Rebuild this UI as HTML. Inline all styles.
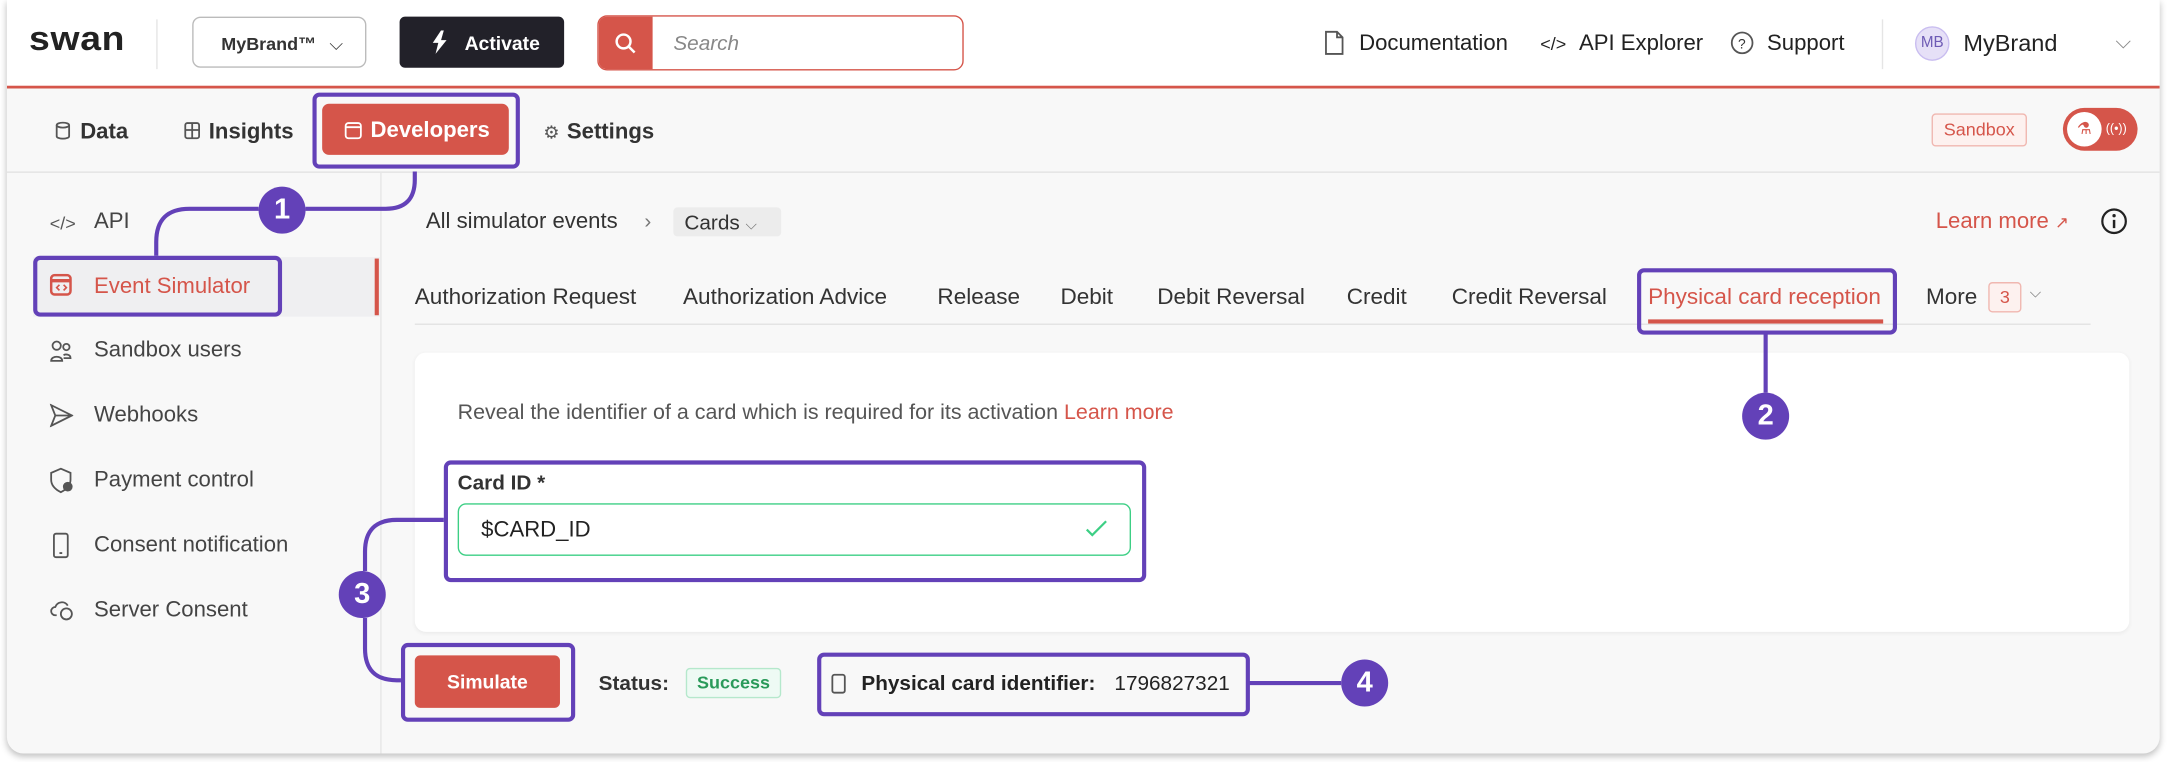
<!DOCTYPE html>
<html><head><meta charset="utf-8">
<style>
*{box-sizing:border-box;margin:0;padding:0}
html,body{width:2168px;height:761px;overflow:hidden;background:#fff}
#w{position:absolute;left:0;top:0;width:1568px;height:551px;transform:scale(1.38265);transform-origin:0 0;font-family:"Liberation Sans",sans-serif;color:#222;font-size:15.5px}
.a{position:absolute;white-space:nowrap}
.card{position:absolute;left:5px;top:0;width:1557px;height:545px;background:#f8f8f8;border-radius:0 0 12px 12px;box-shadow:0 2px 5px rgba(0,0,0,.25);overflow:hidden}
.pb{position:absolute;border:3px solid #6341b8;border-radius:5px}
.num{position:absolute;width:34px;height:34px;border-radius:50%;background:#6341b8;color:#fff;font-weight:bold;font-size:21px;text-align:center;line-height:34px}
svg{position:absolute}
.ic{stroke:#555;fill:none;stroke-width:1.3}
.t{font-size:16.3px;color:#333;top:206px}
</style></head><body>
<div id="w">
<div class="card">
 <div class="a" style="left:0;top:0;width:1557px;height:63px;background:#fff"></div>
 <div class="a" style="left:0;top:62px;width:1557px;height:2px;background:#d5554a"></div>
 <div class="a" style="left:0;top:124px;width:1557px;height:1px;background:#e3e3e3"></div>
 <div class="a" style="left:270px;top:125px;width:1px;height:420px;background:#e6e6e6"></div>
</div>
<!-- header -->
<div class="a" style="left:21px;top:13px;font-size:27px;letter-spacing:0.5px;color:#222;font-weight:bold;transform:scaleY(0.92)">swan</div>
<div class="a" style="left:113px;top:14px;width:1px;height:36px;background:#e5e5e5"></div>
<div class="a" style="left:139px;top:12px;width:126px;height:37px;border:1px solid #bbb;border-radius:6px;font-size:13px;padding:11px 0 0 20px;font-weight:bold;color:#333">MyBrand™ <span style="font-weight:normal;font-size:13px;margin-left:6px">⌵</span></div>
<div class="a" style="left:289px;top:12px;width:119px;height:37px;background:#222129;border-radius:4px;color:#fff;font-size:14px;font-weight:bold;padding:11px 0 0 47px">Activate</div>
<svg style="left:312px;top:22px" width="12" height="17" viewBox="0 0 12 17"><path d="M7 0L1 9h4l-2 8 8-10H7l2-7z" fill="#fff"/></svg>
<div class="a" style="left:432px;top:11px;width:265px;height:40px;border:1.5px solid #d5554a;border-radius:7px;overflow:hidden;background:#fff">
 <div class="a" style="left:0;top:0;width:39px;height:40px;background:#d5554a"></div>
 <svg style="left:11px;top:11px" width="17" height="17" viewBox="0 0 17 17"><circle cx="7" cy="7" r="5" stroke="#fff" stroke-width="1.8" fill="none"/><path d="M11 11l4 4" stroke="#fff" stroke-width="1.8"/></svg>
 <div class="a" style="left:54px;top:11px;color:#888;font-style:italic;font-size:15px">Search</div>
</div>
<svg style="left:958px;top:22px" width="14" height="18" viewBox="0 0 14 18"><path class="ic" d="M1 1h8l4 4v12H1z M9 1v4h4" stroke="#333"/></svg>
<div class="a" style="left:983px;top:23px;font-size:16px">Documentation</div>
<div class="a" style="left:1114px;top:24px;font-size:13px">&lt;/&gt;</div>
<div class="a" style="left:1142px;top:23px;font-size:16px">API Explorer</div>
<svg style="left:1251px;top:22px" width="18" height="18" viewBox="0 0 18 18"><circle cx="9" cy="9" r="7.5" class="ic" stroke="#333"/><text x="6" y="13" font-size="10" fill="#333" font-family="Liberation Sans">?</text></svg>
<div class="a" style="left:1278px;top:23px;font-size:16px">Support</div>
<div class="a" style="left:1361px;top:14px;width:1px;height:36px;background:#e5e5e5"></div>
<div class="a" style="left:1385px;top:19px;width:25px;height:25px;border-radius:50%;background:#e6e0f7;border:1px solid #c9bdf0;color:#6e5bb5;font-size:11px;text-align:center;line-height:23px">MB</div>
<div class="a" style="left:1420px;top:22px;font-size:17px">MyBrand</div>
<div class="a" style="left:1530px;top:22px;font-size:15px;color:#888">⌵</div>
<!-- nav -->
<svg style="left:40px;top:88px" width="11" height="13" viewBox="0 0 11 13"><ellipse cx="5.5" cy="2.5" rx="4.5" ry="1.8" class="ic"/><path class="ic" d="M1 2.5v8c0 1 2 1.8 4.5 1.8s4.5-.8 4.5-1.8v-8"/></svg>
<div class="a" style="left:58px;top:87px;font-size:16px;font-weight:bold;color:#333">Data</div>
<svg style="left:133px;top:88px" width="12" height="13" viewBox="0 0 12 13"><rect x="1" y="1" width="10" height="11" rx="1.5" class="ic"/><path class="ic" d="M6 1v11M1 6h10"/></svg>
<div class="a" style="left:151px;top:87px;font-size:16px;font-weight:bold;color:#333">Insights</div>
<div class="a" style="left:233px;top:75px;width:135px;height:37px;background:#d5554a;border-radius:5px;color:#fff;font-weight:bold;font-size:16px;padding:11px 0 0 35px">Developers</div>
<svg style="left:249px;top:88px" width="14" height="14" viewBox="0 0 14 14"><rect x="1" y="1" width="11" height="11" rx="2" stroke="#fff" fill="none" stroke-width="1.3"/><path d="M1 4h11" stroke="#fff" stroke-width="1.3"/></svg>
<div class="pb" style="left:226px;top:67px;width:150px;height:55px"></div>
<div class="a" style="left:393px;top:88px;font-size:13px;color:#555">⚙</div>
<div class="a" style="left:410px;top:87px;font-size:16px;font-weight:bold;color:#333">Settings</div>
<div class="a" style="left:1397px;top:82px;width:69px;height:24px;border:1px solid #f0b7b0;background:#fdf1ef;border-radius:3px;color:#d5554a;font-size:13px;text-align:center;line-height:22px">Sandbox</div>
<div class="a" style="left:1492px;top:78px;width:54px;height:31px;border-radius:16px;background:#d5554a">
 <div class="a" style="left:3px;top:3px;width:25px;height:25px;border-radius:50%;background:#fff;color:#d5554a;font-size:12px;text-align:center;line-height:25px">⚗</div>
 <div class="a" style="left:31px;top:10px;color:#fff;font-size:9px">((•))</div>
</div>
<!-- sidebar -->
<div class="a" style="left:24px;top:186px;width:251px;height:43px;background:#efeff1"></div>
<div class="a" style="left:271px;top:187px;width:3px;height:41px;background:#d5554a"></div>
<div class="a" style="left:36px;top:154px;font-size:13px;color:#555">&lt;/&gt;</div>
<div class="a" style="left:68px;top:152px;font-size:16px;color:#444">API</div>
<svg style="left:36px;top:198px" width="18" height="18" viewBox="0 0 18 18"><rect x="1" y="1" width="14" height="14" rx="2.5" stroke="#d5554a" fill="none" stroke-width="1.8"/><path d="M1 5h14" stroke="#d5554a" stroke-width="2.5"/><path d="M7 8l-2 2 2 2M10 8l2 2-2 2" stroke="#d5554a" stroke-width="1.2" fill="none"/></svg>
<div class="a" style="left:68px;top:199px;font-size:16px;color:#d5554a">Event Simulator</div>
<div class="pb" style="left:24px;top:185px;width:180px;height:44px"></div>
<svg style="left:36px;top:246px" width="17" height="17" viewBox="0 0 17 17"><circle cx="5" cy="4" r="3" class="ic"/><circle cx="12" cy="5" r="2.3" class="ic"/><path class="ic" d="M1 15c0-4 8-4 8 0zM10 13h5c0-3-4-3-5-2"/></svg>
<div class="a" style="left:68px;top:245px;font-size:16px;color:#444">Sandbox users</div>
<svg style="left:36px;top:292px" width="17" height="17" viewBox="0 0 17 17"><path class="ic" d="M1 1l15 7.5L1 16l3-7.5z M4 8.5h12"/></svg>
<div class="a" style="left:68px;top:292px;font-size:16px;color:#444">Webhooks</div>
<svg style="left:36px;top:338px" width="18" height="19" viewBox="0 0 18 19"><path class="ic" d="M8 1l7 3v5c0 4-3 7-7 9-4-2-7-5-7-9V4z"/><circle cx="13" cy="14" r="3.5" fill="#555"/></svg>
<div class="a" style="left:68px;top:339px;font-size:16px;color:#444">Payment control</div>
<svg style="left:38px;top:385px" width="12" height="19" viewBox="0 0 12 19"><rect x="1" y="1" width="10" height="17" rx="1.5" class="ic"/><path class="ic" d="M5 15h2"/></svg>
<div class="a" style="left:68px;top:386px;font-size:16px;color:#444">Consent notification</div>
<svg style="left:36px;top:432px" width="18" height="18" viewBox="0 0 18 18"><path class="ic" d="M5 13H4a3 3 0 010-6 5 5 0 019-1"/><circle cx="12" cy="12" r="4" class="ic"/></svg>
<div class="a" style="left:68px;top:433px;font-size:16px;color:#444">Server Consent</div>
<!-- breadcrumb -->
<div class="a" style="left:308px;top:152px;font-size:16px;color:#333">All simulator events</div>
<div class="a" style="left:466px;top:152px;font-size:15px;color:#777">›</div>
<div class="a" style="left:487px;top:150px;width:78px;height:21px;background:#ececec;border-radius:3px;font-size:15px;padding:3px 0 0 8px;color:#333">Cards <span style="font-size:11px;color:#777">⌵</span></div>
<div class="a" style="left:1400px;top:152px;font-size:16px;color:#d5554a">Learn more <span style="font-size:12px">↗</span></div>
<svg style="left:1519px;top:150px" width="20" height="20" viewBox="0 0 20 20"><circle cx="10" cy="10" r="8.5" stroke="#222" stroke-width="1.6" fill="none"/><path d="M10 9v6" stroke="#222" stroke-width="1.8"/><circle cx="10" cy="6" r="1.2" fill="#222"/></svg>
<!-- tabs -->
<div class="a" style="left:300px;top:234px;width:1212px;height:1px;background:#e2e2e2"></div>
<div class="a t" style="left:300px">Authorization Request</div>
<div class="a t" style="left:494px">Authorization Advice</div>
<div class="a t" style="left:678px">Release</div>
<div class="a t" style="left:767px">Debit</div>
<div class="a t" style="left:837px">Debit Reversal</div>
<div class="a t" style="left:974px">Credit</div>
<div class="a t" style="left:1050px">Credit Reversal</div>
<div class="a t" style="left:1192px;color:#d5554a">Physical card reception</div>
<div class="a" style="left:1192px;top:231px;width:170px;height:3px;background:#d5554a"></div>
<div class="pb" style="left:1184px;top:194px;width:188px;height:48px"></div>
<div class="a t" style="left:1393px">More</div>
<div class="a" style="left:1438px;top:204px;width:24px;height:22px;border:1px solid #f0b7b0;background:#fdf1ef;border-radius:3px;color:#d5554a;font-size:13px;text-align:center;line-height:20px">3</div>
<div class="a" style="left:1468px;top:206px;font-size:11px;color:#777">⌵</div>
<!-- content card -->
<div class="a" style="left:300px;top:255px;width:1240px;height:202px;background:#fff;border-radius:8px;box-shadow:0 1px 3px rgba(0,0,0,.06)"></div>
<div class="a" style="left:331px;top:290px;font-size:15.5px;color:#555">Reveal the identifier of a card which is required for its activation <span style="color:#d5554a">Learn more</span></div>
<div class="a" style="left:331px;top:341px;font-size:15px;font-weight:bold;color:#333">Card ID *</div>
<div class="a" style="left:331px;top:364px;width:487px;height:38px;border:1.3px solid #3dcf85;border-radius:6px"></div>
<div class="a" style="left:348px;top:375px;font-size:16px;color:#222">$CARD_ID</div>
<svg style="left:785px;top:376px" width="16" height="13" viewBox="0 0 16 13"><path d="M1 7l4 4 10-10" stroke="#3dcf85" stroke-width="1.6" fill="none"/></svg>
<div class="pb" style="left:321px;top:333px;width:508px;height:88px"></div>
<!-- annotation lines -->
<svg style="left:0;top:0" width="1568" height="551" viewBox="0 0 1568 551"><g stroke="#6341b8" stroke-width="3" fill="none">
<path d="M300 124v6q0 21-21 21h-58"/>
<path d="M187 151h-50q-24 0-24 24v10"/>
<path d="M1277 241v43"/>
<path d="M321 376h-34q-23 0-23 23v14"/>
<path d="M264 447v22q0 23 23 23h3"/>
<path d="M903 494h67"/>
</g></svg>
<div class="num" style="left:187px;top:135px">1</div>
<div class="num" style="left:1260px;top:284px">2</div>
<div class="num" style="left:245px;top:413px">3</div>
<div class="num" style="left:970px;top:477px">4</div>
<!-- bottom row -->
<div class="a" style="left:300px;top:474px;width:105px;height:38px;background:#d5554a;border-radius:4px;color:#fff;font-size:14px;font-weight:bold;text-align:center;line-height:38px">Simulate</div>
<div class="pb" style="left:290px;top:465px;width:126px;height:57px"></div>
<div class="a" style="left:433px;top:486px;font-size:15px;font-weight:bold;color:#333">Status:</div>
<div class="a" style="left:496px;top:483px;width:69px;height:22px;background:#eefaf4;border:1px solid #b5e8cc;border-radius:3px;color:#2a9a5a;font-size:13px;font-weight:bold;text-align:center;line-height:20px">Success</div>
<div class="pb" style="left:591px;top:472px;width:313px;height:46px"></div>
<svg style="left:601px;top:487px" width="11" height="15" viewBox="0 0 11 15"><rect x="1" y="1" width="9" height="13" rx="1.5" class="ic"/></svg>
<div class="a" style="left:623px;top:486px;font-size:15px;font-weight:bold;color:#222">Physical card identifier:</div>
<div class="a" style="left:806px;top:486px;font-size:15px;color:#222">1796827321</div>
</div>
</body></html>
